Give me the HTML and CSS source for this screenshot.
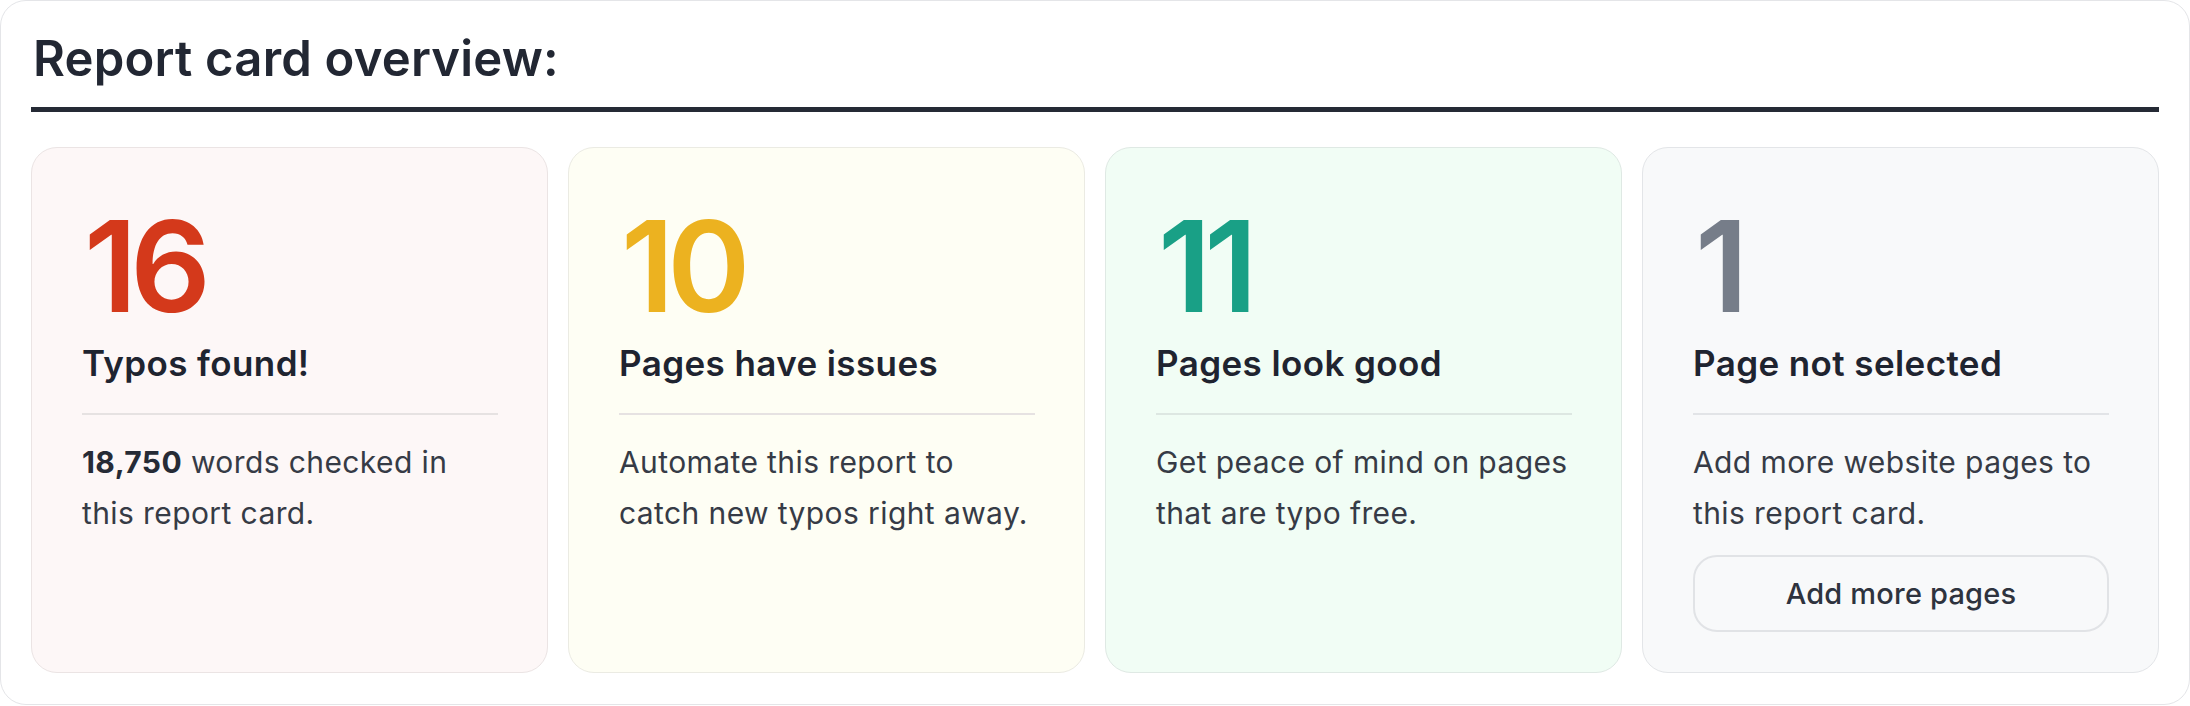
FILE: index.html
```html
<!DOCTYPE html>
<html lang="en">
<head>
<meta charset="utf-8">
<title>Report card overview</title>
<link rel="stylesheet" href="styles.css">
</head>
<body>
<section class="overview">
  <h2 class="overview-title">Report card overview:</h2>
  <div class="cards">
    <div class="card card-red">
      <div class="card-number">16</div>
      <div class="card-label">Typos found!</div>
      <hr class="card-divider">
      <p class="card-text"><strong>18,750</strong> words checked in this report card.</p>
    </div>
    <div class="card card-yellow">
      <div class="card-number">10</div>
      <div class="card-label">Pages have issues</div>
      <hr class="card-divider">
      <p class="card-text">Automate this report to catch new typos right away.</p>
    </div>
    <div class="card card-green">
      <div class="card-number">11</div>
      <div class="card-label">Pages look good</div>
      <hr class="card-divider">
      <p class="card-text">Get peace of mind on pages that are typo free.</p>
    </div>
    <div class="card card-gray">
      <div class="card-number">1</div>
      <div class="card-label">Page not selected</div>
      <hr class="card-divider">
      <p class="card-text">Add more website pages to this report card.</p>
      <button class="card-button" type="button">Add more pages</button>
    </div>
  </div>
</section>
</body>
</html>
```

FILE: styles.css
```css
* { box-sizing: border-box; }

html, body {
  margin: 0;
  padding: 0;
  background: #ffffff;
}

body {
  font-family: Inter, "Noto Sans", "Liberation Sans", sans-serif;
  color: #1f2430;
}

.overview {
  width: 2190px;
  height: 705px;
  border: 1px solid #e4e5e8;
  border-radius: 26px;
  padding: 29px 30px 30px 30px;
  background: #ffffff;
}

.overview-title {
  margin: 0;
  font-size: 49px;
  line-height: 58px;
  font-weight: 600;
  letter-spacing: 0.2px;
  color: #222733;
  padding: 0 0 19px 2px;
  border-bottom: 5px solid #252a35;
}

.cards {
  margin-top: 35px;
  display: grid;
  grid-template-columns: repeat(4, 1fr);
  gap: 20px;
}

.card {
  border: 1px solid #e6e3e3;
  border-radius: 26px;
  padding: 54px 49px 40px 50px;
  display: flex;
  flex-direction: column;
}

.card-red { background: #fdf7f7; border-color: #ebe4e4; }
.card-yellow { background: #fefef4; border-color: #ebebe3; }
.card-green { background: #f1fdf5; border-color: #dfe9e4; }
.card-gray { background: #f8f9fa; border-color: #e3e5e8; }

.card-number {
  font-size: 126px;
  line-height: 128px;
  font-weight: 600;
  letter-spacing: -7px;
  margin-left: 2px;
}

.card-red .card-number { color: #d4391b; }
.card-yellow .card-number { color: #ecb220; }
.card-green .card-number { color: #19a086; }
.card-gray .card-number { color: #767d89; }

.card-label {
  margin-top: 13px;
  font-size: 35px;
  line-height: 40px;
  font-weight: 600;
  letter-spacing: 0.4px;
  color: #1f2430;
}

.card-divider {
  margin: 30px 0 0 0;
  border: 0;
  height: 2px;
  background: #e6e2e2;
}

.card-gray .card-divider { background: #e2e4e7; }
.card-green .card-divider { background: #dde7e2; }

.card-text {
  margin: 22px 0 0 0;
  font-size: 30px;
  line-height: 51px;
  font-weight: 400;
  letter-spacing: 0.4px;
  color: #363b46;
}

.card-text strong {
  font-weight: 700;
  color: #262b36;
}

.card-button {
  margin-top: 16px;
  height: 77px;
  width: 100%;
  border: 2px solid #e1e3e6;
  border-radius: 24px;
  background: #f8f9fa;
  font-family: Inter, "Noto Sans", "Liberation Sans", sans-serif;
  font-size: 29px;
  font-weight: 500;
  letter-spacing: 0.2px;
  color: #2e333e;
  padding: 0;
}
```
